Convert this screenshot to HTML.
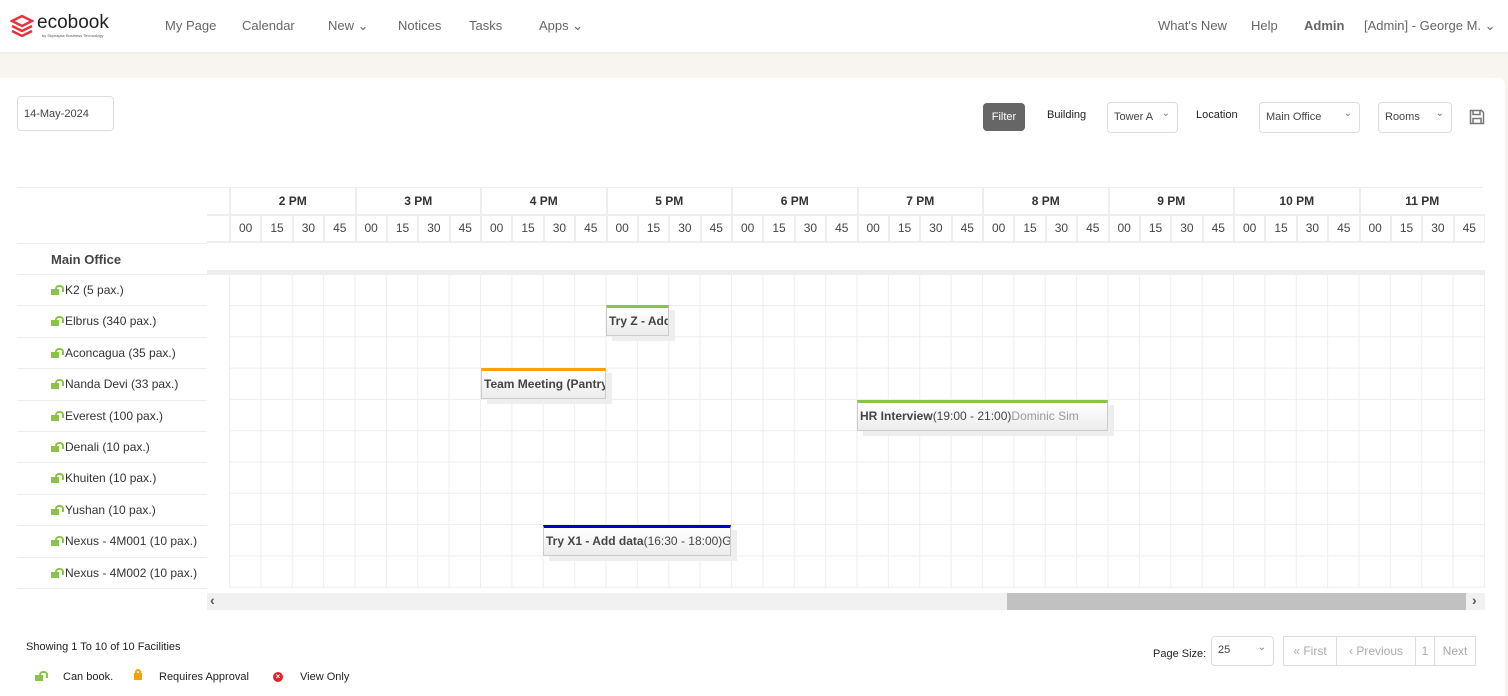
<!DOCTYPE html>
<html><head><meta charset="utf-8"><style>
*{box-sizing:border-box;margin:0;padding:0}
body{width:1508px;height:696px;overflow:hidden;background:#f8f4ef;font-family:"Liberation Sans",sans-serif;color:#333;position:relative}
.a{position:absolute}
.nav{top:0;left:0;width:1508px;height:52px;background:#fff;box-shadow:0 1px 3px rgba(0,0,0,.06)}
.nav span{position:absolute;top:18px;font-size:13px;color:#666}
.card{top:78px;left:0;width:1505px;height:618px;background:#fff;border-radius:0 6px 0 0}
.sel{border:1px solid #ddd;border-radius:4px;height:31px;font-size:11px;color:#444;padding:8px 6px}
.dd:after{content:"⌄";position:absolute;right:7px;top:5px;font-size:10px;color:#777}
.hr{display:flex}
.hr div{width:125.5px;height:26px;border-left:2px solid #eee;font-size:12px;font-weight:bold;text-align:center;line-height:26px;color:#333}
.mr{display:flex;background:#eee}
.mr div{width:31.375px;height:25px;background:#fff;border-left:2px solid #eee;font-size:12px;text-align:center;line-height:25px;color:#444}
.lab{left:17px;width:190px;height:31.4px;border-bottom:1px solid #eee;font-size:12px;padding-left:48px;line-height:31px;color:#333}
.lab i,.lk{position:absolute;left:34px;top:14px;width:8px;height:6px;background:#8bc34a}
.lab i:before,.lk:before{content:"";position:absolute;left:4px;top:-4px;width:5px;height:5px;border:2px solid #8bc34a;border-bottom:none;border-radius:4px 4px 0 0}
.ev{background:linear-gradient(#fff,#ececec);border:1px solid #ccc;border-top:3px solid;font-size:12px;font-weight:bold;color:#444;white-space:nowrap;overflow:hidden;padding:6px 2px;box-shadow:6px 5px 0 #eee}
.ev span{font-weight:normal}
.pg{top:636px;height:30px;border:1px solid #ddd;font-size:12px;color:#aaa;line-height:28px;text-align:center}
</style></head><body>
<div class="a nav">
<svg class="a" style="left:10px;top:15px" width="24" height="22" viewBox="0 0 24 22"><g fill="none" stroke="#e8303a" stroke-width="2.4"><path d="M2 6l10-5 10 5-10 5z"/><path d="M2 11l10 5 10-5"/><path d="M2 16l10 5 10-5"/></g></svg>
<div class="a" style="left:37px;top:12px;font-size:19px;color:#222">ecobook</div>
<div class="a" style="left:42px;top:33px;font-size:4px;color:#555">by Skynapse Business Technology</div>
<span style="left:165px">My Page</span><span style="left:242px">Calendar</span><span style="left:328px">New ⌄</span><span style="left:398px">Notices</span><span style="left:469px">Tasks</span><span style="left:539px">Apps ⌄</span>
<span style="left:1158px">What's New</span><span style="left:1251px">Help</span><span style="left:1304px;font-weight:bold">Admin</span><span style="left:1364px">[Admin] - George M. ⌄</span>
</div>
<div class="a card"></div>
<div class="a sel" style="left:17px;top:96px;width:97px;height:35px;padding-top:11px">14-May-2024</div>
<div class="a" style="left:983px;top:103px;width:42px;height:28px;background:#666;border-radius:4px;color:#fff;font-size:11px;text-align:center;line-height:28px">Filter</div>
<div class="a" style="left:1047px;top:109px;font-size:11px;color:#222">Building</div>
<div class="a sel dd" style="left:1107px;top:102px;width:71px">Tower A</div>
<div class="a" style="left:1196px;top:109px;font-size:11px;color:#222">Location</div>
<div class="a sel dd" style="left:1259px;top:102px;width:101px">Main Office</div>
<div class="a sel dd" style="left:1378px;top:102px;width:74px">Rooms</div>
<svg class="a" style="left:1469px;top:109px" width="16" height="16" viewBox="0 0 16 16"><path d="M1.5 1.5h11l2 2v11h-13z M4 1.5v4h7v-4 M4 14.5v-5h8v5" fill="none" stroke="#777" stroke-width="1.5"/></svg>

<div class="a" style="left:17px;top:187px;width:1466px;height:1px;background:#eee"></div>
<div class="a hr" style="left:229px;top:188px">
<div>2 PM</div><div>3 PM</div><div>4 PM</div><div>5 PM</div><div>6 PM</div><div>7 PM</div><div>8 PM</div><div>9 PM</div><div>10 PM</div><div>11 PM</div></div>
<div class="a" style="left:207px;top:214px;width:1278px;height:2px;background:#eee"></div>
<div class="a mr" style="left:229px;top:216px;width:1256px">
<div>00</div><div>15</div><div>30</div><div>45</div><div>00</div><div>15</div><div>30</div><div>45</div><div>00</div><div>15</div><div>30</div><div>45</div><div>00</div><div>15</div><div>30</div><div>45</div><div>00</div><div>15</div><div>30</div><div>45</div><div>00</div><div>15</div><div>30</div><div>45</div><div>00</div><div>15</div><div>30</div><div>45</div><div>00</div><div>15</div><div>30</div><div>45</div><div>00</div><div>15</div><div>30</div><div>45</div><div>00</div><div>15</div><div>30</div><div>45</div></div>
<div class="a" style="left:207px;top:241px;width:1278px;height:2px;background:#eee"></div>
<div class="a" style="left:17px;top:243px;width:190px;height:32px;border-top:1px solid #eee;border-bottom:1px solid #eee;font-size:13px;font-weight:bold;padding-left:34px;line-height:32px;color:#444">Main Office</div>
<div class="a" style="left:207px;top:270px;width:1278px;height:5px;background:#eee"></div>
<div class="a" style="left:229px;top:275px;width:1256px;height:313px;background:#fff;background-image:linear-gradient(to right,#eee 1px,transparent 1px),linear-gradient(#eee 1px,transparent 1px);background-size:31.375px 31.3px;background-position:0 30px"></div>
<div class="a lab" style="top:275px"><i></i>K2 (5 pax.)</div>
<div class="a lab" style="top:306.4px"><i></i>Elbrus (340 pax.)</div>
<div class="a lab" style="top:337.8px"><i></i>Aconcagua (35 pax.)</div>
<div class="a lab" style="top:369.2px"><i></i>Nanda Devi (33 pax.)</div>
<div class="a lab" style="top:400.6px"><i></i>Everest (100 pax.)</div>
<div class="a lab" style="top:432px"><i></i>Denali (10 pax.)</div>
<div class="a lab" style="top:463.4px"><i></i>Khuiten (10 pax.)</div>
<div class="a lab" style="top:494.8px"><i></i>Yushan (10 pax.)</div>
<div class="a lab" style="top:526.2px"><i></i>Nexus - 4M001 (10 pax.)</div>
<div class="a lab" style="top:557.6px"><i></i>Nexus - 4M002 (10 pax.)</div>

<div class="a ev" style="left:606px;top:305px;width:63px;height:31px;border-top-color:#8bc34a">Try Z - Add data</div>
<div class="a ev" style="left:481px;top:368px;width:125px;height:31px;border-top-color:#f5a300">Team Meeting (Pantry)</div>
<div class="a ev" style="left:857px;top:400px;width:251px;height:31px;border-top-color:#8bc34a">HR Interview<span>(19:00 - 21:00)</span><span style="color:#999">Dominic Sim</span></div>
<div class="a ev" style="left:543px;top:525px;width:188px;height:31px;border-top-color:#0000c8">Try X1 - Add data<span>(16:30 - 18:00)George</span></div>

<div class="a" style="left:207px;top:593px;width:1278px;height:17px;background:#f1f1f1"></div>
<div class="a" style="left:1007px;top:593px;width:459px;height:17px;background:#c1c1c1"></div>
<div class="a" style="left:210px;top:592px;font-size:14px;font-weight:bold;color:#555">‹</div>
<div class="a" style="left:1472px;top:592px;font-size:14px;font-weight:bold;color:#555">›</div>

<div class="a" style="left:26px;top:641px;font-size:11px;color:#222">Showing 1 To 10 of 10 Facilities</div>
<div class="a lk" style="left:35px;top:675px"></div>
<div class="a" style="left:63px;top:671px;font-size:11px;color:#222">Can book.</div>
<div class="a" style="left:134px;top:673px;width:8px;height:7px;background:#f5a300"></div>
<div class="a" style="left:135px;top:669px;width:6px;height:6px;border:2px solid #f5a300;border-bottom:none;border-radius:3px 3px 0 0"></div>
<div class="a" style="left:159px;top:671px;font-size:11px;color:#222">Requires Approval</div>
<div class="a" style="left:273px;top:672px;width:10px;height:10px;border-radius:50%;background:#e3232c;color:#fff;font-size:8px;line-height:10px;text-align:center;font-weight:bold">×</div>
<div class="a" style="left:300px;top:671px;font-size:11px;color:#222">View Only</div>

<div class="a" style="left:1153px;top:648px;font-size:11px;color:#222">Page Size:</div>
<div class="a sel dd" style="left:1211px;top:636px;width:63px;height:30px;padding-top:7px">25</div>
<div class="a pg" style="left:1283px;width:54px">« First</div>
<div class="a pg" style="left:1337px;width:79px;border-left:none">‹ Previous</div>
<div class="a pg" style="left:1416px;width:19px;border-left:none">1</div>
<div class="a pg" style="left:1435px;width:41px;border-left:none">Next</div>
</body></html>
